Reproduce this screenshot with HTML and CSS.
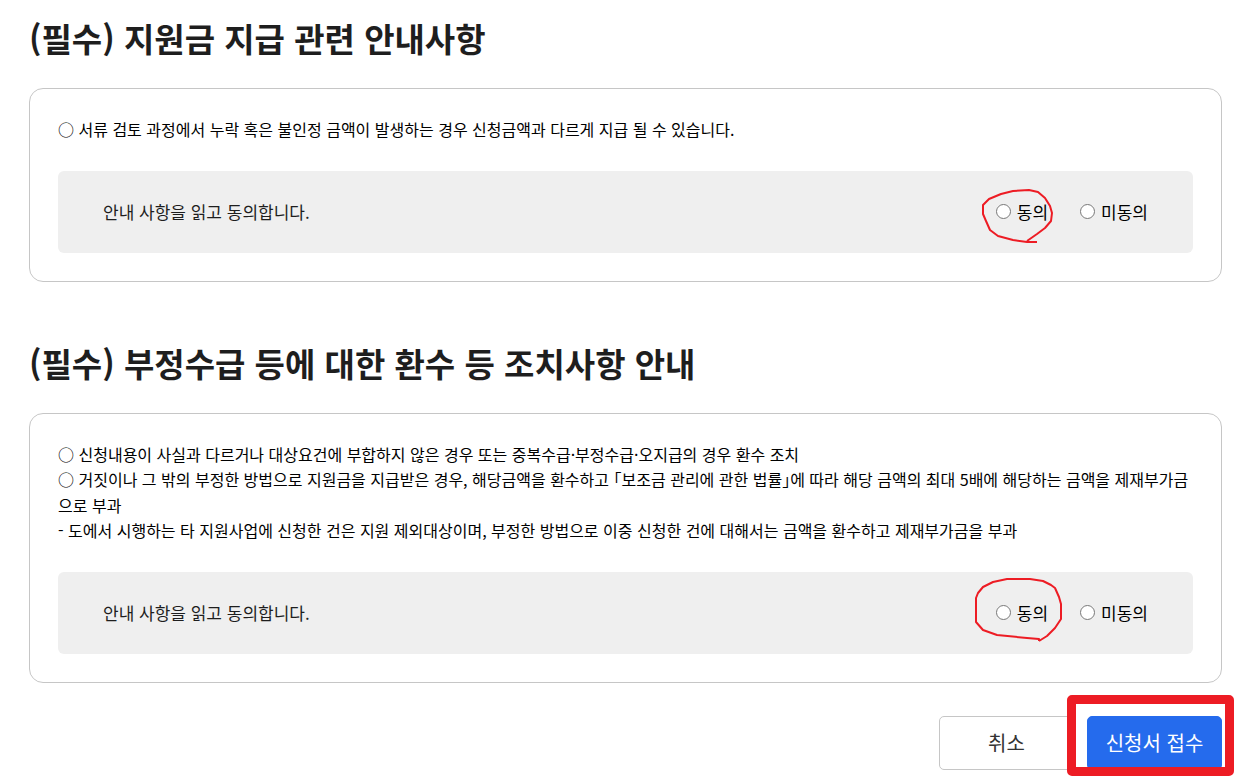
FILE: index.html
```html
<!DOCTYPE html>
<html lang="ko">
<head>
    <meta charset="UTF-8">
    <meta name="viewport" content="width=device-width, initial-scale=1.0">
    <title>지원금 신청</title>
    <link rel="stylesheet" href="styles.css">
</head>
<body>

    <main>
        <form action="">

            <section>
                <h2>(필수) 지원금 지급 관련 안내사항</h2>
                <div class="box">
                    <p class="notice">○ 서류 검토 과정에서 누락 혹은 불인정 금액이 발생하는 경우 신청금액과 다르게 지급 될 수 있습니다.</p>
                    <div class="agree" role="radiogroup" aria-labelledby="agree1">
                        <p id="agree1">안내 사항을 읽고 동의합니다.</p>
                        <div class="options">
                            <label class="marked">
                                <input type="radio" name="pay" value="Y">동의
                                <svg class="mark" width="90" height="70" viewBox="0 -4 90 70">
                                    <path d="M62 53 L52 53 L38 51 L23 47 L15 41 L11 32 L8 25 L8 16 L14 10 L26 5 L38 2 L54 1 L63 3 L70 9 L75 17 L77 24 L76 32 L70 39 L62 45 L52 52"/>
                                </svg>
                            </label>
                            <label><input type="radio" name="pay" value="N">미동의</label>
                        </div>
                    </div>
                </div>
            </section>

            <section>
                <h2>(필수) 부정수급 등에 대한 환수 등 조치사항 안내</h2>
                <div class="box">
                    <p class="notice">
                        ○ 신청내용이 사실과 다르거나 대상요건에 부합하지 않은 경우 또는 중복수급·부정수급·오지급의 경우 환수 조치<br>
                        ○ 거짓이나 그 밖의 부정한 방법으로 지원금을 지급받은 경우, 해당금액을 환수하고 <span class="law">「보조금 관리에 관한 법률」</span>에 따라 해당 금액의 최대 5배에 해당하는 금액을 제재부가금으로 부과<br>
                        - 도에서 시행하는 타 지원사업에 신청한 건은 지원 제외대상이며, 부정한 방법으로 이중 신청한 건에 대해서는 금액을 환수하고 제재부가금을 부과
                    </p>
                    <div class="agree" role="radiogroup" aria-labelledby="agree2">
                        <p id="agree2">안내 사항을 읽고 동의합니다.</p>
                        <div class="options">
                            <label class="marked">
                                <input type="radio" name="refund" value="Y">동의
                                <svg class="mark" width="90" height="70" viewBox="0 0 90 70">
                                    <path d="M64 55 L64 53 L52 52 L22 49 L8 44 L1 36 L1 12 L3 7 L8 1 L18 -4 L32 -7 L55 -7 L68 -5 L76 -1 L80 2 L84 11 L86 18 L86 33 L80 42 L72 50 L64 55"/>
                                </svg>
                            </label>
                            <label><input type="radio" name="refund" value="N">미동의</label>
                        </div>
                    </div>
                </div>
            </section>

            <div class="buttons">
                <button type="button" class="cancel">취소</button>
                <button type="submit" class="submit">신청서 접수</button>
            </div>

        </form>
    </main>

</body>
</html>
```
FILE: styles.css
```css
* {
    box-sizing: border-box;
}

body {
    margin: 0;
    background: #fff;
    color: #000;
    font-family: "Noto Sans CJK KR", sans-serif;
    font-size: 16px;
}

main {
    padding: 13px 14px 6px 29px;
}

h2, p {
    margin: 0;
}

section {
    margin-bottom: 56px;
}

section:last-of-type {
    margin-bottom: 33px;
}

h2 {
    margin-bottom: 25px;
    color: #1e1e1e;
    font-size: 33px;
    font-weight: 700;
    line-height: 50px;
}

.box {
    padding: 28px;
    border: 1px solid #c6c6c6;
    border-radius: 14px;
}

.notice {
    margin-bottom: 28px;
    line-height: 1.6;
}

/* half width corner brackets */
.law {
    font-feature-settings: "halt";
}

.agree {
    display: flex;
    justify-content: space-between;
    align-items: center;
    height: 82px;
    padding: 0 45px;
    background: #efefef;
    border-radius: 6px;
    color: #1e1e1e;
    font-size: 17px;
}

.options {
    display: flex;
    gap: 32px;
    color: #000;
}

label {
    display: flex;
    align-items: center;
    gap: 6px;
}

input {
    width: 15px;
    height: 15px;
    margin: 0;
}

/* hand drawn circle over the option */
.marked {
    position: relative;
}

.mark {
    position: absolute;
    top: -14px;
    left: -21px;
    overflow: visible;
    pointer-events: none;
}

.mark path {
    fill: none;
    stroke: #ed1c24;
    stroke-width: 2;
    stroke-linejoin: round;
}

.buttons {
    display: flex;
    justify-content: flex-end;
    gap: 13px;
}

button {
    width: 135px;
    height: 54px;
    padding: 0;
    border: 1px solid #c6c6c6;
    border-radius: 5px;
    background: #fff;
    color: #333;
    font-family: inherit;
    font-size: 20px;
}

.submit {
    position: relative;
    border-color: #256bed;
    background: #256bed;
    color: #fff;
}

/* red frame around the submit button */
.submit::after {
    content: "";
    position: absolute;
    top: -22px;
    right: -13px;
    bottom: -7px;
    left: -21px;
    border: 9px solid #ed1c24;
    border-radius: 5px;
}
```
